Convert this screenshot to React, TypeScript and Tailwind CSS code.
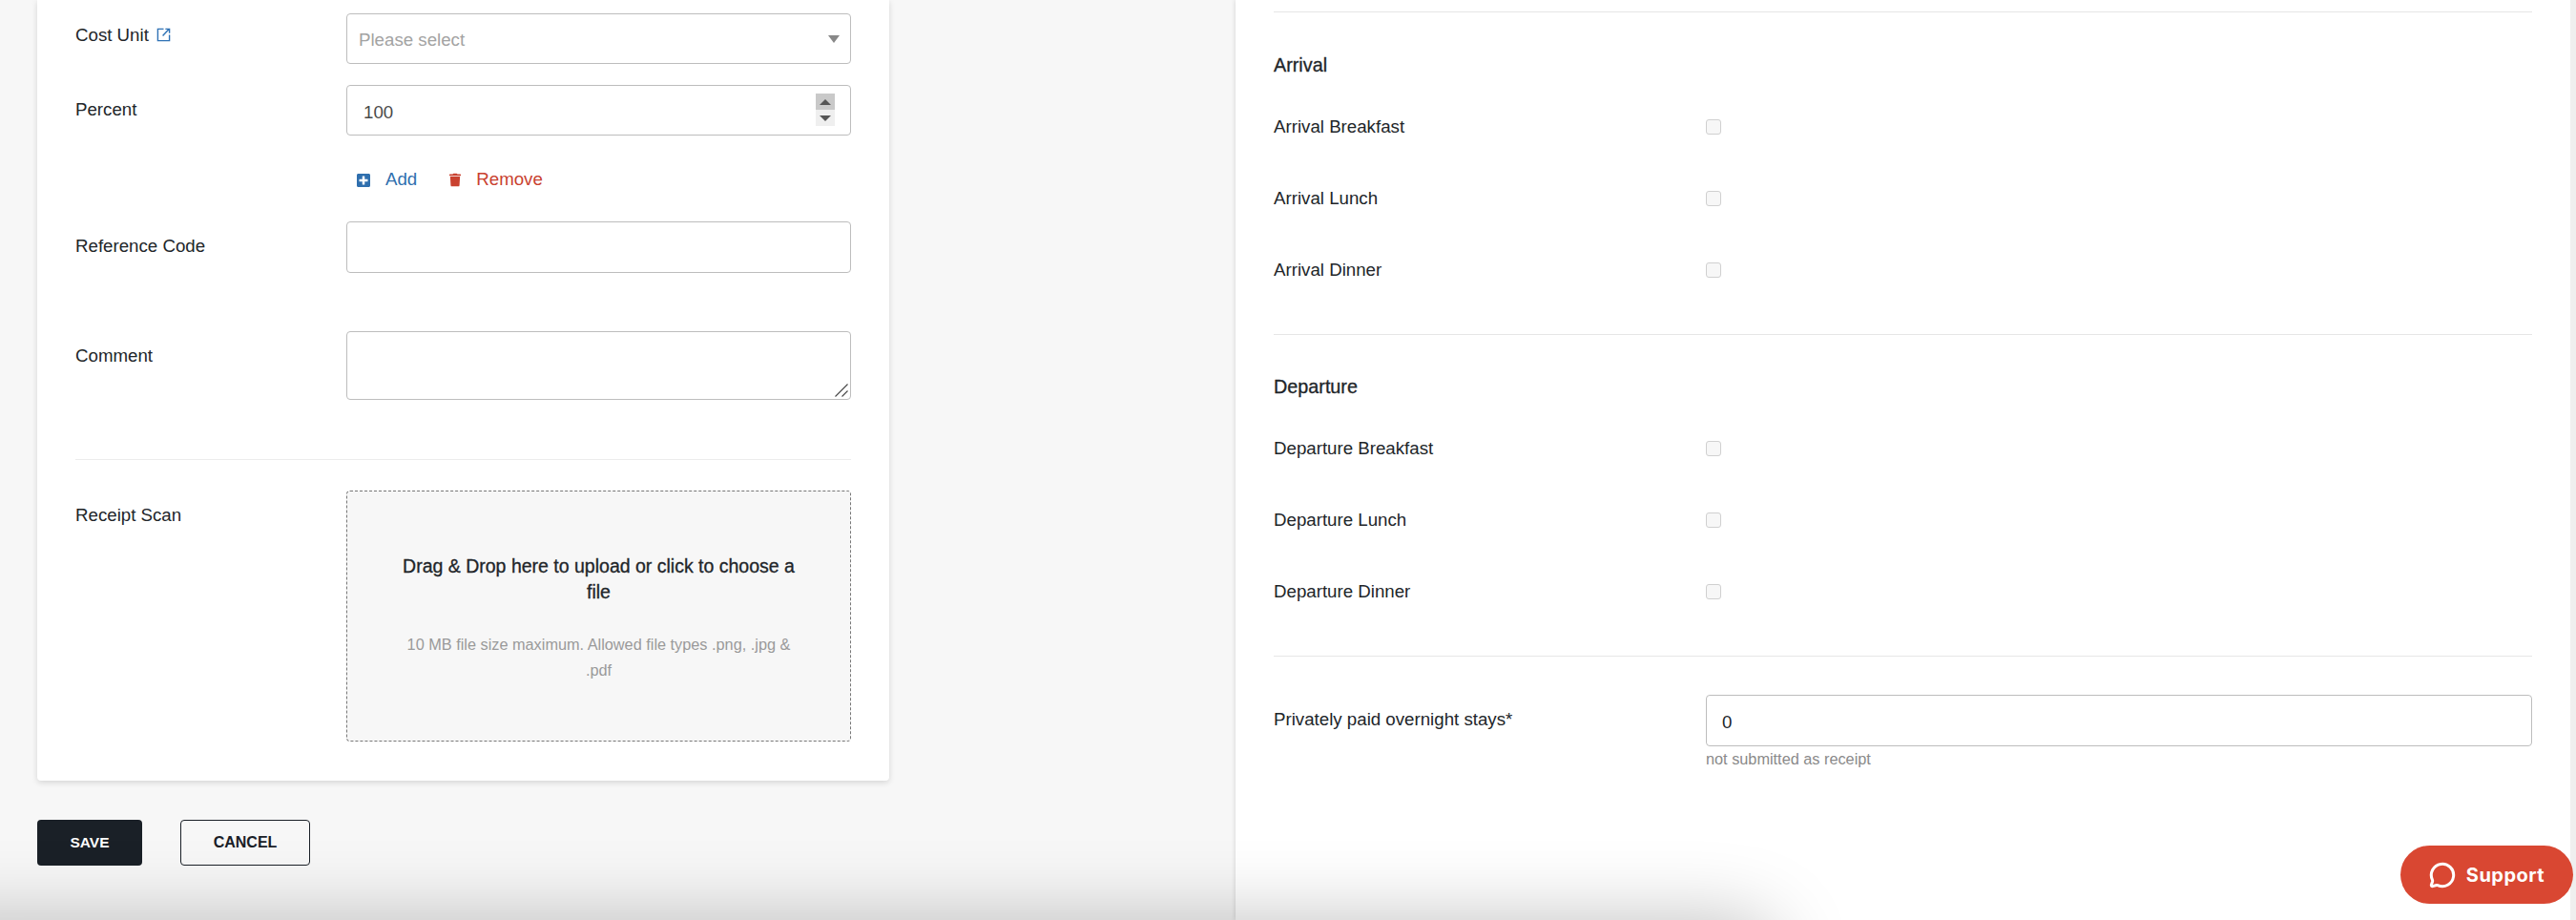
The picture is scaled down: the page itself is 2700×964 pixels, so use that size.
import { FaPlusSquare, FaTrash } from 'react-icons/fa';
import { MessageCircle } from 'lucide-react';

const inputClass =
  'w-full rounded-[4px] border border-[#bdbdbd] bg-white pt-[3px] text-[18.7px] outline-none placeholder:text-[#a3a3a3]';

function Field({ label, children, className, labelClass }: { label: React.ReactNode; children: React.ReactNode; className?: string; labelClass?: string }) {
  return (
    <div className={`flex ${className ?? ''}`}>
      <div className={`w-[284px] shrink-0 text-[18.7px] leading-[27px] text-[#212529] ${labelClass ?? 'pt-[12px]'}`}>{label}</div>
      <div className="w-[529px] shrink-0">{children}</div>
    </div>
  );
}

function MealRow({ label, first }: { label: string; first: boolean }) {
  return (
    <div className={`flex h-[27px] items-center ${first ? 'mt-[37px]' : 'mt-[48px]'}`}>
      <label className="w-[453px] shrink-0 text-[18.7px] leading-[27px] text-[#212529]">{label}</label>
      <input
        type="checkbox"
        disabled
        className="h-[16px] w-[16px] appearance-none rounded-[3px] border border-[#d0d0d0] bg-[#f7f7f7]"
      />
    </div>
  );
}

function MealSection({ title, meals, className }: { title: string; meals: string[]; className: string }) {
  return (
    <section className={`border-b border-[#e6e6e6] ${className}`}>
      <h3 className="text-[19.8px] leading-[27px] text-[#212529] [-webkit-text-stroke:0.3px_#212529]">{title}</h3>
      {meals.map((m, i) => (
        <MealRow key={m} label={m} first={i === 0} />
      ))}
    </section>
  );
}

export default function App() {
  return (
    <div className="relative flex h-[964px] w-[2700px] overflow-hidden bg-[#f7f7f7] font-['Liberation_Sans',Arial,sans-serif]">
      {/* left column */}
      <div className="w-[1295px] shrink-0 pl-[39px]">
        <div className="w-[893px] rounded-b-[4px] bg-white px-[40px] pt-[14px] pb-[41px] shadow-[0_2px_6px_rgba(0,0,0,0.14)]">
          <Field labelClass="pt-[9px]" label={<span className="flex items-center gap-[8px]">Cost Unit
            <svg viewBox="0 0 16 16" className="h-[15px] w-[15px]" fill="none" stroke="#2f72b5" strokeWidth="1.5">
              <path d="M8 1.5H1.5v13h13V8M7 9l7-7.5M10 1.5h4.5V6" />
            </svg></span>}>
            <div className="relative">
              <input placeholder="Please select" readOnly className={`${inputClass} h-[53px] px-[12px]`} />
              <div className="absolute top-[23px] right-[12px] h-0 w-0 border-x-[6px] border-t-[8px] border-x-transparent border-t-[#888888]" />
            </div>
          </Field>
          <Field label="Percent" className="mt-[22px]">
            <div className="relative">
              <input value="100" readOnly className={`${inputClass} h-[53px] px-[17px] pt-[5px] text-[#4a4a4a]`} />
              <div className="absolute top-[9px] right-[17px] flex w-[20px] flex-col">
                <div className="flex h-[17px] items-center justify-center bg-[#c9c9c9]">
                  <div className="h-0 w-0 border-x-[6px] border-b-[6px] border-x-transparent border-b-[#555555]" />
                </div>
                <div className="flex h-[17px] items-center justify-center bg-[#efefef]">
                  <div className="h-0 w-0 border-x-[6px] border-t-[6px] border-x-transparent border-t-[#555555]" />
                </div>
              </div>
            </div>
          </Field>
          <div className="mt-[33px] ml-[295px] flex h-[27px] items-center text-[18.7px]">
            <FaPlusSquare className="h-[16px] w-[14px] text-[#2f6fae]" />
            <span className="ml-[16px] text-[#2f6fae]">Add</span>
            <FaTrash className="ml-[34px] h-[15px] w-[12px] text-[#c9412f]" />
            <span className="ml-[16px] text-[#c9412f]">Remove</span>
          </div>
          <Field label="Reference Code" className="mt-[30px]">
            <input readOnly className={`${inputClass} h-[54px] px-[16px]`} />
          </Field>
          <Field label="Comment" className="mt-[61px]">
            <div className="relative">
              <textarea readOnly className={`${inputClass} block h-[72px] resize-none px-[16px]`} />
              <svg viewBox="0 0 14 14" className="absolute right-[3px] bottom-[3px] h-[14px] w-[14px]" fill="none" stroke="#444444" strokeWidth="1.1">
                <path d="M0.5 13.5 13.5 0.5M7.5 13.5l6-6" />
              </svg>
            </div>
          </Field>
          <div className="mt-[62px] mb-[32px] border-t border-[#ececec]" />
          <Field label="Receipt Scan">
            <div className="flex h-[263px] flex-col items-center justify-center rounded-[4px] border border-dashed border-[#777777] bg-[#f7f7f7] px-[55px] pt-[4px] text-center">
              <p className="text-[19.5px] leading-[27px] text-[#212529] [-webkit-text-stroke:0.3px_#212529]">Drag &amp; Drop here to upload or click to choose a file</p>
              <p className="mt-[28px] text-[16.3px] leading-[27px] text-[#9a9a9a]">10 MB file size maximum. Allowed file types .png, .jpg &amp; .pdf</p>
            </div>
          </Field>
        </div>
        <div className="mt-[41px] flex gap-[40px]">
          <button className="h-[48px] w-[110px] rounded-[4px] bg-[#1a2027] text-[15.5px] font-bold text-white">SAVE</button>
          <button className="h-[48px] w-[136px] rounded-[4px] border border-[#1a2027] text-[16px] font-bold text-[#1a2027]">CANCEL</button>
        </div>
      </div>

      {/* right column */}
      <div className="w-[1399px] shrink-0 bg-white pt-[12px] pr-[40px] pl-[40px] shadow-[0_0_5px_rgba(0,0,0,0.16)]">
        <div className="border-t border-[#e6e6e6]" />
        <MealSection title="Arrival" meals={['Arrival Breakfast', 'Arrival Lunch', 'Arrival Dinner']} className="pt-[42px] pb-[54px]" />
        <MealSection title="Departure" meals={['Departure Breakfast', 'Departure Lunch', 'Departure Dinner']} className="pt-[41px] pb-[54px]" />
        <div className="mt-[40px] flex">
          <label className="w-[453px] shrink-0 pt-[12px] text-[18.7px] leading-[27px] text-[#212529]">Privately paid overnight stays*</label>
          <div className="flex-1">
            <input value="0" readOnly className={`${inputClass} h-[54px] px-[16px] pt-[4px] text-[#212529]`} />
            <p className="mt-[3px] text-[16.3px] leading-[20px] text-[#8a8a8a]">not submitted as receipt</p>
          </div>
        </div>
      </div>
      <div className="w-[6px] shrink-0 bg-[#efefef]" />

      {/* bottom shade */}
      <div className="pointer-events-none absolute top-[964px] left-[-100px] h-[100px] w-[1960px] rounded-[40px] shadow-[0_0_80px_rgba(0,0,0,0.25)]" />

      <button className="absolute top-[886px] left-[2516px] flex h-[61px] w-[181px] items-center justify-center gap-[11px] rounded-full bg-[#d94732] font-['Inter',sans-serif] text-[20px] font-bold tracking-[0.5px] text-white">
        <MessageCircle className="h-[28px] w-[28px]" strokeWidth={2.6} />
        Support
      </button>
    </div>
  );
}
